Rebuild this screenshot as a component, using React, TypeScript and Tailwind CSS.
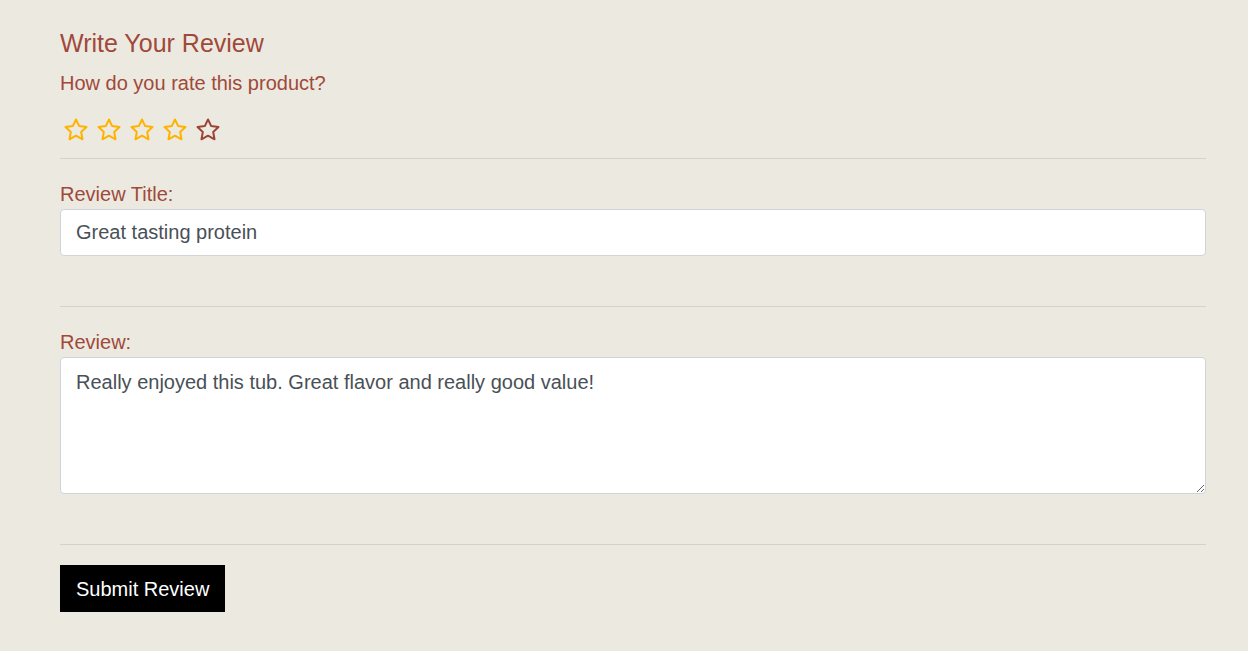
function StarIcon({ color }: { color: string }) {
  return (
    <svg width="24" height="24" viewBox="0 0 24 24" fill="none" stroke={color} strokeWidth="2" strokeLinejoin="round">
      <polygon points="12,1.5 15.2,8.1 22.5,9 17.2,14 18.5,21.3 12,17.7 5.5,21.3 6.8,14 1.5,9 8.8,8.1" />
    </svg>
  );
}

export default function App() {
  const rating = 4;
  return (
    <div className="min-h-screen bg-[#ece9e1] font-['Liberation_Sans',Arial,sans-serif]">
      <div className="ml-[60px] mr-[42px] pt-[28px]">
        <h2 className="text-[25px] leading-[30px] text-[#a0493a]">Write Your Review</h2>
        <p className="mt-[13px] text-[20px] leading-[24px] text-[#a0493a]">How do you rate this product?</p>

        {/* Stars */}
        <div className="mt-[23px] ml-[4px] flex gap-[9px]">
          {[1, 2, 3, 4, 5].map((i) => (
            <StarIcon key={i} color={i <= rating ? "#ffb300" : "#9c4535"} />
          ))}
        </div>

        <hr className="mt-[16px] border-t border-[#d6d2ca]" />

        <label className="mt-[23px] block text-[20px] leading-[24px] text-[#a0493a]">Review Title:</label>
        <input
          className="mt-[3px] block h-[47px] w-full rounded-[4px] border border-[#ced4da] bg-white px-[15px] text-[20px] text-[#495057] outline-none"
          defaultValue="Great tasting protein"
        />

        <hr className="mt-[50px] border-t border-[#d6d2ca]" />

        <label className="mt-[23px] block text-[20px] leading-[24px] text-[#a0493a]">Review:</label>
        <textarea
          className="mt-[3px] block h-[137px] w-full rounded-[4px] border border-[#ced4da] bg-white px-[15px] pt-[12px] text-[20px] leading-[24px] text-[#495057] outline-none"
          defaultValue="Really enjoyed this tub. Great flavor and really good value!"
        />

        <hr className="mt-[50px] border-t border-[#d6d2ca]" />

        <button className="mt-[20px] h-[47px] bg-black px-[16px] text-[20px] text-white">Submit Review</button>
      </div>
    </div>
  );
}
